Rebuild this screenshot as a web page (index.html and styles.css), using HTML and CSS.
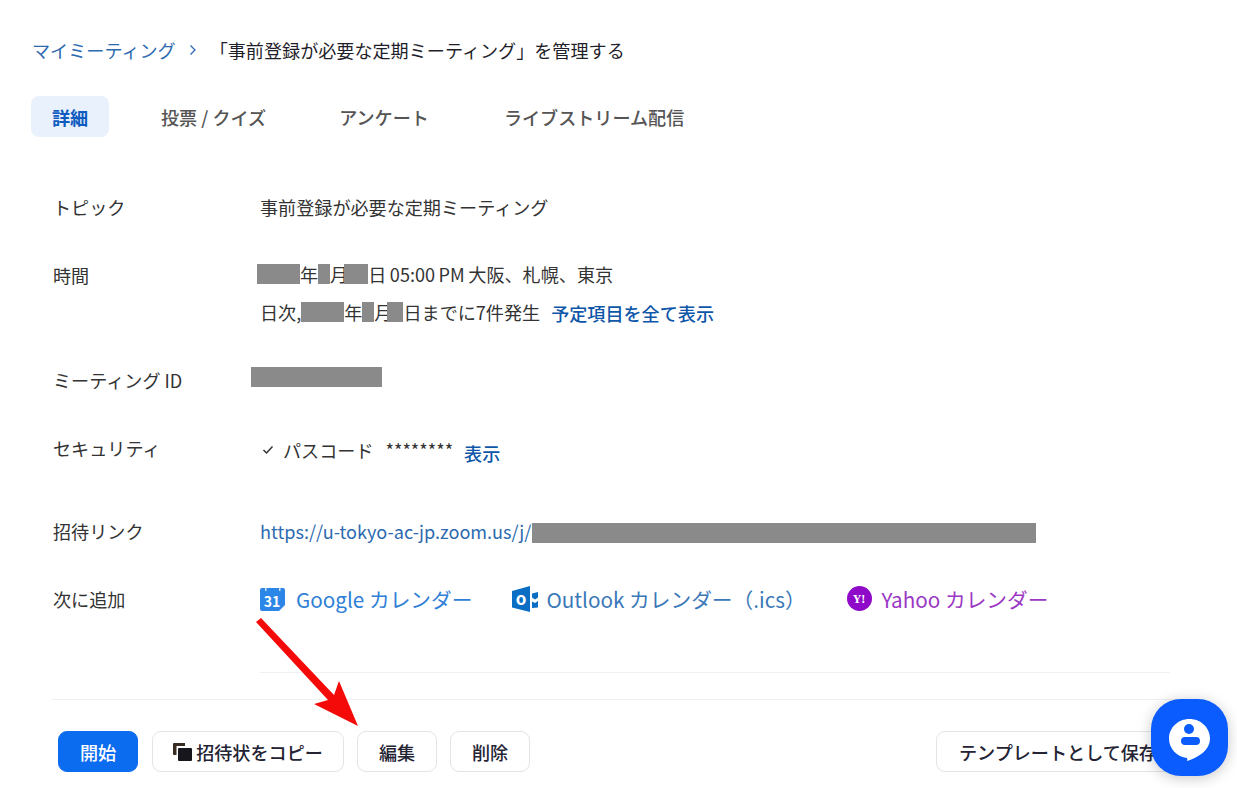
FILE: index.html
```html
<!DOCTYPE html>
<html lang="ja">
<head>
<meta charset="utf-8">
<title>ミーティングを管理する</title>
<link rel="stylesheet" href="styles.css">
</head>
<body>
<main class="page">
  <nav class="crumbs">
    <a class="link-plain" href="#">マイミーティング</a>
    <svg class="chev" width="8" height="12" viewBox="0 0 8 12"><path d="M1.500 1.500 6 6l-4.500 4.500" fill="none" stroke="#2d6ab0" stroke-width="1.300"/></svg>
    <span class="crumb-title">「事前登録が必要な定期ミーティング」を管理する</span>
  </nav>
  <div class="tabs">
    <span class="tab tab-active">詳細</span>
    <span class="tab tab-2">投票 / クイズ</span>
    <span class="tab tab-3">アンケート</span>
    <span class="tab tab-4">ライブストリーム配信</span>
  </div>
  <section class="details">
    <div class="row row-topic">
      <div class="label">トピック</div>
      <div class="value">事前登録が必要な定期ミーティング</div>
    </div>
    <div class="row row-time">
      <div class="label">時間</div>
      <div class="value">
        <div class="line line-1"><i class="mask m-y"></i>年<i class="mask m-m"></i>月<i class="mask m-d"></i>日 05:00 PM 大阪、札幌、東京</div>
        <div class="line line-2">日次,<i class="mask m-y"></i>年<i class="mask m-m"></i>月<i class="mask m-m2"></i>日までに7件発生<a class="link-bold more" href="#">予定項目を全て表示</a></div>
      </div>
    </div>
    <div class="row row-id">
      <div class="label">ミーティング ID</div>
      <div class="value"><i class="mask m-id"></i></div>
    </div>
    <div class="row row-sec">
      <div class="label">セキュリティ</div>
      <div class="value sec">
        <svg class="check" width="12" height="10" viewBox="0 0 12 10"><path d="M1.500 5 4.500 8l6-6.500" fill="none" stroke="#333" stroke-width="1.500"/></svg>
        <span>パスコード</span><span class="stars">********</span><a class="link-bold show" href="#">表示</a>
      </div>
    </div>
    <div class="row row-invite">
      <div class="label">招待リンク</div>
      <div class="value"><a class="link-plain" href="#">https://u-tokyo-ac-jp.zoom.us/j/</a><i class="mask m-url"></i></div>
    </div>
    <div class="row row-cal">
      <div class="label">次に追加</div>
      <div class="value cals">
        <a class="cal cal-g" href="#">
          <svg width="25" height="23" viewBox="0 0 25 23"><path d="M2 0H23a2 2 0 0 1 2 2V17L19 23H2a2 2 0 0 1-2-2V2a2 2 0 0 1 2-2z" fill="#2b86e8"/><rect x="5" y="0" width="1.500" height="3" fill="#cfe3fa"/><rect x="19" y="0" width="1.500" height="3" fill="#cfe3fa"/><text x="12" y="19" text-anchor="middle" class="cal-num">31</text></svg>
          Google カレンダー</a>
        <a class="cal cal-o" href="#">
          <svg width="26" height="26" viewBox="0 0 26 26"><path d="M0 5 18 0V26L0 21.500z" fill="#0a6fc4"/><path d="M20 7.500 26 6V11.500L23 13.500 20 11.500z" fill="#0a6fc4"/><path d="M20 15.500 23 17 26 15V21.500L20 22z" fill="#0a6fc4"/><text x="9" y="18.500" text-anchor="middle" class="cal-o-t">o</text></svg>
          Outlook カレンダー（.ics）</a>
        <a class="cal cal-y" href="#">
          <svg width="25" height="25" viewBox="0 0 25 25"><circle cx="12.500" cy="12.500" r="12.500" fill="#8f09c9"/><text x="12" y="16.500" text-anchor="middle" class="cal-y-t">Y!</text></svg>
          Yahoo カレンダー</a>
      </div>
    </div>
    <hr class="rule rule-inner">
  </section>
  <hr class="rule rule-outer">
  <footer class="actions">
    <button class="btn btn-primary">開始</button>
    <button class="btn btn-copy">
      <svg width="19" height="18" viewBox="0 0 19 18"><path d="M0 1a1 1 0 0 1 1-1h11v3H3.500V12H1a1 1 0 0 1-1-1z" fill="#3a2c22"/><rect x="5" y="5" width="14" height="13" rx="1" fill="#16161c"/></svg>招待状をコピー</button>
    <button class="btn btn-small">編集</button>
    <button class="btn btn-small">削除</button>
    <button class="btn btn-template">テンプレートとして保存</button>
  </footer>
</main>
<svg class="arrow" width="120" height="120" viewBox="0 0 120 120"><path d="M6 12 11 8 84 85 89 71 108 116 64 94 78 90z" fill="#f50a0a"/></svg>
<div class="chat">
  <svg width="41" height="42" viewBox="0 0 41 42"><path d="M20.500 0C9.200 0 0 8.700 0 19.500 0 29.500 8 38 18 39c.5 1 .5 2 0 3 4-1 8-3 12-5.500C36 33 41 27 41 19.500 41 8.700 31.800 0 20.500 0z" fill="#fff"/><circle cx="20" cy="10" r="5" fill="#0b5cff"/><rect x="12" y="18" width="19" height="8" rx="4" fill="#0b5cff"/></svg>
</div>
</body>
</html>
```
FILE: styles.css
```css
html, body {
  margin: 0;
  height: 788px;
  overflow: hidden;
  background: #fff;
}
body {
  position: relative;
  font-family: "Noto Sans CJK JP", "Noto Sans", sans-serif;
  font-size: 18.100px;
  color: #232333;
}
a { text-decoration: none; }
.page { display: flex; flex-direction: column; }
.crumbs {
  display: flex;
  align-items: center;
  height: 30px;
  margin: 35px 0 0 32px;
}
.link-plain { color: #2d6ab0; }
.chev { margin-left: 13px; }
.crumb-title { margin-left: 13px; color: #1f1f2b; }
.tabs {
  display: flex;
  align-items: center;
  height: 41px;
  margin: 31px 0 0 31px;
  font-weight: 500;
  color: #555;
}
.tab { display: flex; align-items: center; height: 41px; }
.tab-active {
  justify-content: center;
  width: 78px;
  background: #e8f1fc;
  border-radius: 8px;
  color: #0e5cc0;
  font-weight: 700;
}
.tab-2 { margin-left: 52px; }
.tab-3 { margin-left: 73px; }
.tab-4 { margin-left: 75px; }
.details { display: flex; flex-direction: column; margin: 0 0 0 53px; }
.row { display: flex; align-items: flex-start; }
.label { width: 207px; flex: none; line-height: 30px; color: #333; }
.value { line-height: 30px; color: #333; }
.row-topic { margin-top: 55px; height: 68px; }
.row-time { height: 105px; }
.line { display: flex; align-items: center; height: 30px; white-space: pre; }
.line-1 { margin-left: -3px; margin-top: -1px; word-spacing: -0.500px; }
.line-2 { margin-top: 8px; }
.mask { display: inline-block; height: 20px; background: #8a8a8a; }
.m-y { width: 43px; }
.m-m { width: 12px; }
.m-d { width: 24px; margin-left: -4px; }
.m-m2 { width: 16px; margin-left: -5px; }
.m-id { display: block; width: 131px; margin: 2px 0 0 -9px; }
.m-url { width: 504px; vertical-align: -4px; margin-left: 1px; }
.link-bold { color: #0e56a8; font-weight: 500; }
.more { margin-left: 11px; position: relative; top: 1px; }
.row-id { height: 68px; }
.row-sec { height: 83px; }
.sec { display: flex; align-items: center; height: 30px; margin-top: 2px; }
.check { margin: 0 9px 0 2px; }
.stars { margin-left: 12px; position: relative; top: -1px; }
.show { margin-left: 11px; position: relative; top: 3px; }
.row-invite { height: 68px; }
.row-cal { height: 88px; }
.cals { display: flex; align-items: center; height: 30px; font-size: 20.700px; }
.cal { display: flex; align-items: center; white-space: nowrap; }
.cal svg { margin-right: 11px; }
.cal-g { color: #2f7fd6; margin-left: 0; }
.cal-o { color: #3a78b8; margin-left: 40px; }
.cal-o svg { margin-right: 8px; }
.cal-y { color: #9b38c4; margin-left: 41px; }
.cal-y svg { margin: -2px 10px 0 0; }
.cal-num { font-size: 14px; font-weight: 700; fill: #fff; }
.cal-o-t { font-size: 17px; font-weight: 700; fill: #fff; }
.cal-y-t { font-size: 12px; font-weight: 700; fill: #fff; font-family: "Liberation Serif", serif; }
.rule { border: 0; border-top: 1px solid #f0f0f2; margin: 0; height: 0; }
.rule-inner { margin-left: 207px; width: 910px; }
.rule-outer { margin: 26px 0 0 52px; width: 1133px; }
.actions { display: flex; gap: 13px; margin: 31px 0 0 58px; }
.btn {
  display: flex;
  align-items: center;
  justify-content: center;
  height: 41px;
  padding: 0;
  font: inherit;
  font-weight: 500;
  color: #232333;
  background: #fff;
  border: 1px solid #e4e4e8;
  border-radius: 9px;
}
.btn-primary {
  width: 80px;
  background: #0b6cf0;
  border-color: #0b6cf0;
  color: #fff;
}
.btn-copy { width: 192px; margin-left: 1px; }
.btn-copy svg { margin-right: 4px; }
.btn-small { width: 80px; }
.btn-template { width: 244px; margin-left: 393px; white-space: nowrap; flex: none; }
.arrow { position: absolute; left: 250px; top: 610px; }
.chat {
  position: absolute;
  left: 1151px;
  top: 699px;
  width: 77px;
  height: 77px;
  box-sizing: border-box;
  padding-top: 5px;
  display: flex;
  align-items: center;
  justify-content: center;
  background: #0b5cff;
  border-radius: 30px;
  box-shadow: 0 2px 14px rgba(0, 0, 0, .22);
}
```
